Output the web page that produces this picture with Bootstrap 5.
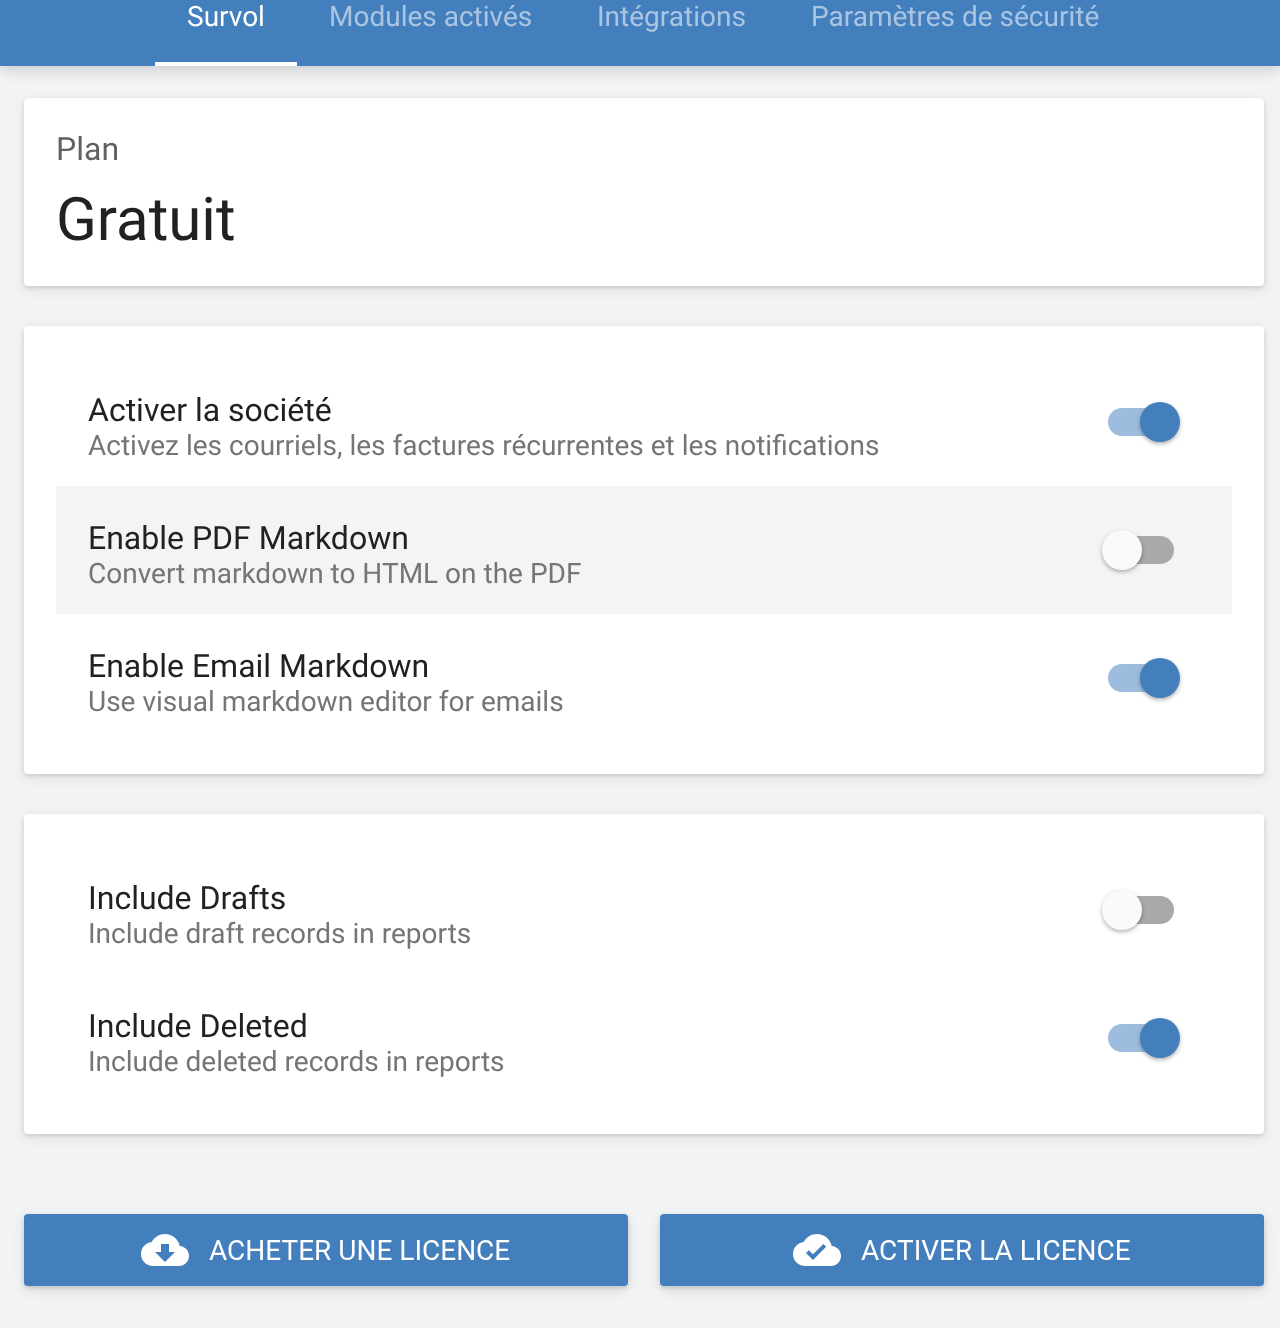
<!DOCTYPE html>
<html lang="fr">
<head>
<meta charset="utf-8">
<title>Survol</title>
<link href="https://cdn.jsdelivr.net/npm/bootstrap@5.3.0/dist/css/bootstrap.min.css" rel="stylesheet">
<style>
body{background:#f2f3f5;font-family:Roboto,"Liberation Sans",sans-serif;color:#212121;height:1328px;overflow:hidden;text-rendering:geometricPrecision}
.topbar{background:#437ebd;height:66px;padding-left:155px;box-shadow:0 4px 14px rgba(0,0,0,.16);position:relative}
.tab-item{display:block;padding:0 32px;height:66px;font-size:28px;line-height:34px;color:rgba(255,255,255,.55);text-decoration:none}
.tab-item span,.plan-label,.plan-value,.set-copy,.act span{will-change:transform}
.tab-item span{display:block}
.tab-item:nth-child(3){margin-left:.5px}
.tab-item:nth-child(4){margin-left:1.5px}
.tab-item.on{color:#fff;border-bottom:4px solid #fff}
.content{padding:32px 16px 0 24px}
.panel{border:0;border-radius:4px;box-shadow:0 2px 4px rgba(0,0,0,.12),0 4px 14px rgba(0,0,0,.08);margin-bottom:40px}
.plan-body{padding:32px;height:188px}
.plan-label{font-size:32px;line-height:38px;color:#616161}
.plan-value{font-size:60px;line-height:72px;margin-top:16px;color:#212121}
.rows{padding:32px 0}
.set-row{margin:0 32px;padding:0 52px 0 32px;height:128px}
.set-row.hl{background:#f4f4f4}
.set-copy{padding-top:10px}
.set-title{font-size:32px;line-height:36px;margin-bottom:1px;color:#212121}
.set-sub{font-size:28px;line-height:34px;color:#757575}
.tog{position:relative;display:block;width:66px;height:28px;border-radius:14px;background:#a9a9a9;margin-right:6px}
.tog i{position:absolute;top:-6px;left:-6px;width:40px;height:40px;border-radius:50%;background:#fafafa;box-shadow:0 2px 4px rgba(0,0,0,.3)}
.tog.yes{background:#9ebdde}
.tog.yes i{left:32px;background:#437ebd}
.actions{--bs-gutter-x:32px;margin-top:80px;margin-left:-16px;margin-right:-16px}
.act{background:#437ebd;border:0;border-radius:4px;color:#fff;height:72px;font-size:28px;line-height:34px;text-transform:uppercase;box-shadow:0 2px 4px rgba(0,0,0,.14),0 4px 14px rgba(0,0,0,.1);gap:20px}
.act span{padding:1px 1px 0 0}
.act:hover{background:#437ebd;color:#fff}
.act svg{width:48px;height:48px;fill:#fff;flex:none}
</style>
</head>
<body>
<nav class="topbar d-flex">
  <a class="tab-item on" href="#"><span>Survol</span></a>
  <a class="tab-item" href="#"><span>Modules activés</span></a>
  <a class="tab-item" href="#"><span>Intégrations</span></a>
  <a class="tab-item" href="#"><span>Paramètres de sécurité</span></a>
</nav>
<main class="content">
  <div class="card panel">
    <div class="plan-body">
      <div class="plan-label">Plan</div>
      <div class="plan-value">Gratuit</div>
    </div>
  </div>
  <div class="card panel">
    <div class="rows">
      <div class="set-row d-flex align-items-center justify-content-between">
        <div class="set-copy"><div class="set-title">Activer la société</div><div class="set-sub">Activez les courriels, les factures récurrentes et les notifications</div></div>
        <span class="tog yes"><i></i></span>
      </div>
      <div class="set-row hl d-flex align-items-center justify-content-between">
        <div class="set-copy"><div class="set-title">Enable PDF Markdown</div><div class="set-sub">Convert markdown to HTML on the PDF</div></div>
        <span class="tog"><i></i></span>
      </div>
      <div class="set-row d-flex align-items-center justify-content-between">
        <div class="set-copy"><div class="set-title">Enable Email Markdown</div><div class="set-sub">Use visual markdown editor for emails</div></div>
        <span class="tog yes"><i></i></span>
      </div>
    </div>
  </div>
  <div class="card panel">
    <div class="rows">
      <div class="set-row d-flex align-items-center justify-content-between">
        <div class="set-copy"><div class="set-title">Include Drafts</div><div class="set-sub">Include draft records in reports</div></div>
        <span class="tog"><i></i></span>
      </div>
      <div class="set-row d-flex align-items-center justify-content-between">
        <div class="set-copy"><div class="set-title">Include Deleted</div><div class="set-sub">Include deleted records in reports</div></div>
        <span class="tog yes"><i></i></span>
      </div>
    </div>
  </div>
  <div class="row actions">
    <div class="col-6">
      <button class="btn act w-100 d-flex align-items-center justify-content-center" type="button">
        <svg viewBox="0 0 24 24" aria-hidden="true"><path d="M19.35 10.04C18.67 6.59 15.64 4 12 4 9.11 4 6.6 5.64 5.35 8.04 2.34 8.36 0 10.91 0 14c0 3.31 2.69 6 6 6h13c2.76 0 5-2.24 5-5 0-2.64-2.05-4.78-4.65-4.96zM17 13l-5 5-5-5h3V9h4v4h3z"/></svg>
        <span>Acheter une licence</span>
      </button>
    </div>
    <div class="col-6">
      <button class="btn act w-100 d-flex align-items-center justify-content-center" type="button">
        <svg viewBox="0 0 24 24" aria-hidden="true"><path d="M19.35 10.04C18.67 6.59 15.64 4 12 4 9.11 4 6.6 5.64 5.35 8.04 2.34 8.36 0 10.91 0 14c0 3.31 2.69 6 6 6h13c2.76 0 5-2.24 5-5 0-2.64-2.05-4.78-4.65-4.96zM10 17l-3.5-3.5 1.41-1.41L10 14.17 15.18 9l1.41 1.41L10 17z"/></svg>
        <span>Activer la licence</span>
      </button>
    </div>
  </div>
</main>
<script src="https://cdn.jsdelivr.net/npm/bootstrap@5.3.0/dist/js/bootstrap.bundle.min.js"></script>
</body>
</html>
